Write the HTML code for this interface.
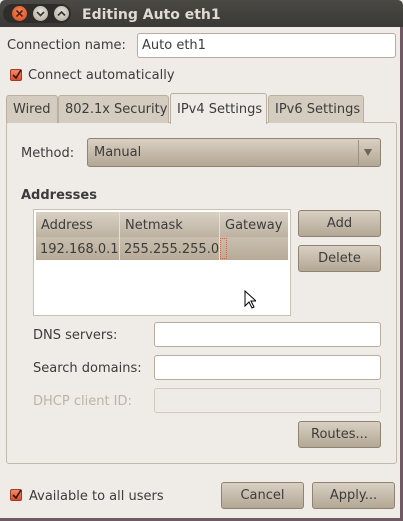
<!DOCTYPE html><html><head><style>
*{box-sizing:border-box;margin:0;padding:0}
body{width:403px;height:521px;overflow:hidden;background:#efebe7;font-family:"DejaVu Sans","Liberation Sans",sans-serif;font-size:13px;color:#3c3c3c;position:relative}
.a{position:absolute}
.t{position:absolute;line-height:16px;white-space:nowrap;margin-top:1px}
.entry{position:absolute;background:#fff;border:1px solid #b7ad9f;border-radius:3px}
.btn{position:absolute;border:1px solid #8f8372;border-radius:3px;background:linear-gradient(#d9d0c3,#b3a794);text-align:center;line-height:25px;color:#3c3c3c}
.cb{position:absolute;width:12px;height:12px;border:1px solid #a03c24;border-radius:2px;background:linear-gradient(#f08a6a,#d9502f)}
.cb svg{position:absolute;left:1px;top:0}
.tab{position:absolute;top:95px;height:28px;background:#d4ccbf;border:1px solid #b9b0a2;border-bottom:none;border-radius:3px 3px 0 0;line-height:28px;padding-left:6px}
</style></head><body>
<div class="a" style="left:0;top:0;width:403px;height:27px;background:linear-gradient(#4a4944,#3a3935);border-radius:5px 5px 0 0"></div>
<div class="a" style="left:3px;top:4px;width:68px;height:19px;border-radius:10px;background:#2e2d29"></div>
<div class="a" style="left:12px;top:6px;width:15px;height:15px;border-radius:50%;background:radial-gradient(circle at 50% 40%,#f58a5a,#d8461a)"></div>
<div class="a" style="left:33px;top:6px;width:15px;height:15px;border-radius:50%;background:radial-gradient(circle at 50% 40%,#e8e5dc,#a8a498)"></div>
<div class="a" style="left:54px;top:6px;width:15px;height:15px;border-radius:50%;background:radial-gradient(circle at 50% 40%,#e8e5dc,#a8a498)"></div>
<svg class="a" style="left:0;top:0" width="80" height="27"><path d="M16.5 10.5l6 6M22.5 10.5l-6 6" stroke="#5a2010" stroke-width="1.6"/><path d="M37 12l3.5 3.5 3.5-3.5" stroke="#3a3935" stroke-width="1.8" fill="none"/><path d="M58 15.5l3.5-3.5 3.5 3.5" stroke="#3a3935" stroke-width="1.8" fill="none"/></svg>
<div class="t" style="left:82px;top:6px;font-weight:bold;font-size:14px;color:#dfdbd2">Editing Auto eth1</div>
<div class="a" style="left:400px;top:27px;width:3px;height:494px;background:#6f5a63"></div>
<div class="a" style="left:0;top:518px;width:403px;height:3px;background:#6f5a63"></div>

<div class="t" style="left:7px;top:37px">Connection name:</div>
<div class="entry" style="left:137px;top:33px;width:259px;height:25px"></div>
<div class="t" style="left:142px;top:37px">Auto eth1</div>
<div class="cb" style="left:10px;top:69px"><svg width="10" height="10"><path d="M1 5l3 3 5-8" stroke="#3a1008" stroke-width="1.6" fill="none"/></svg></div>
<div class="t" style="left:28px;top:67px">Connect automatically</div>

<div class="a" style="left:6px;top:122px;width:391px;height:342px;border:1px solid #c2b9ab;border-radius:3px"></div>
<div class="tab" style="left:6px;width:52px">Wired</div>
<div class="tab" style="left:58px;width:111px">802.1x Security</div>
<div class="tab" style="left:268px;width:96px">IPv6 Settings</div>
<div class="tab" style="left:170px;top:93px;height:31px;width:97px;background:#efebe7;line-height:31px">IPv4 Settings</div>

<div class="t" style="left:21px;top:145px">Method:</div>
<div class="btn" style="left:87px;top:138px;width:294px;height:29px;text-align:left;padding-left:6px;line-height:28px">Manual</div>
<div class="a" style="left:358px;top:140px;width:1px;height:25px;background:#9d9180"></div>
<svg class="a" style="left:363px;top:147px" width="12" height="10"><path d="M1 2h8l-4 7z" fill="#6e6558"/></svg>
<div class="t" style="left:21px;top:187px;font-weight:bold">Addresses</div>

<div class="a" style="left:33px;top:209px;width:258px;height:107px;border:1px solid #c9c0b2;background:#fff"></div>
<div class="a" style="left:36px;top:212px;width:252px;height:25px;background:linear-gradient(#d8d0c3,#bdb2a1)"></div>
<div class="a" style="left:36px;top:237px;width:252px;height:23px;background:linear-gradient(#c9bfaf,#b7ab98)"></div>
<div class="a" style="left:119px;top:212px;width:1px;height:48px;background:#e5dfd5"></div>
<div class="a" style="left:219px;top:212px;width:1px;height:48px;background:#e5dfd5"></div>
<div class="a" style="left:220px;top:238px;width:7px;height:21px;border:1px dotted #e06040"></div>
<div class="t" style="left:41px;top:217px">Address</div>
<div class="t" style="left:125px;top:217px">Netmask</div>
<div class="t" style="left:225px;top:217px">Gateway</div>
<div class="t" style="left:40px;top:241px">192.168.0.1</div>
<div class="t" style="left:124px;top:241px">255.255.255.0</div>
<svg class="a" style="left:244px;top:290px" width="12" height="20"><path d="M1 1v15l4-4 3 6 2-1-3-6h5z" fill="#fff" stroke="#000"/></svg>
<div class="btn" style="left:298px;top:210px;width:83px;height:27px">Add</div>
<div class="btn" style="left:298px;top:245px;width:83px;height:27px">Delete</div>

<div class="t" style="left:33px;top:327px">DNS servers:</div>
<div class="entry" style="left:154px;top:322px;width:227px;height:25px"></div>
<div class="t" style="left:33px;top:360px">Search domains:</div>
<div class="entry" style="left:154px;top:355px;width:227px;height:25px"></div>
<div class="t" style="left:33px;top:393px;color:#bdb3a6">DHCP client ID:</div>
<div class="entry" style="left:154px;top:388px;width:227px;height:25px;background:#efebe7;border-color:#d3cbbf"></div>
<div class="btn" style="left:298px;top:421px;width:83px;height:27px">Routes...</div>

<div class="cb" style="left:10px;top:489px"><svg width="10" height="10"><path d="M1 5l3 3 5-8" stroke="#3a1008" stroke-width="1.6" fill="none"/></svg></div>
<div class="t" style="left:29px;top:488px">Available to all users</div>
<div class="btn" style="left:221px;top:482px;width:83px;height:27px">Cancel</div>
<div class="btn" style="left:312px;top:482px;width:83px;height:27px">Apply...</div>
</body></html>
